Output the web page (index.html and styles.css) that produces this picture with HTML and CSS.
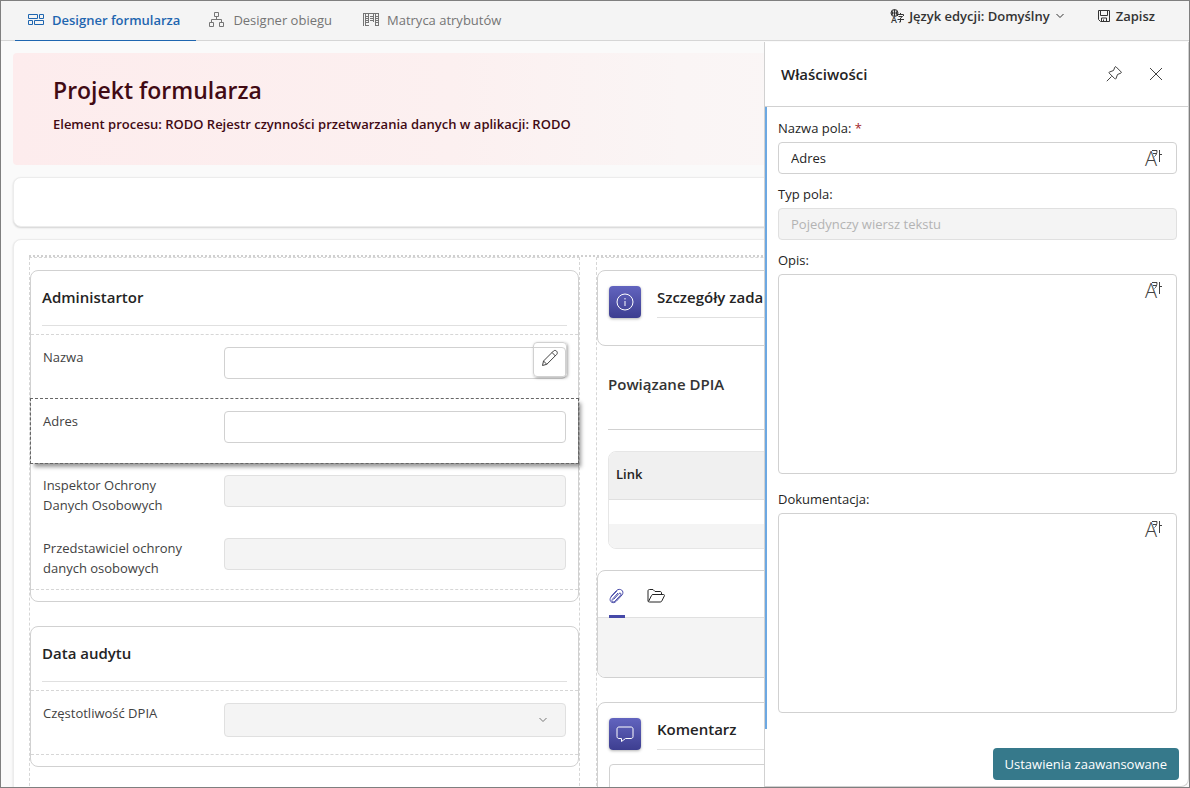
FILE: index.html
```html
<!DOCTYPE html>
<html lang="pl">
<head>
<meta charset="utf-8">
<meta name="viewport" content="width=device-width, initial-scale=1">
<title>Projekt formularza</title>
<link rel="stylesheet" href="styles.css">
</head>
<body>
<svg class="sprite" aria-hidden="true">
  <symbol id="i-translate" viewBox="0 0 18 18">
    <text class="glyph-latin" x="0" y="17">A</text>
    <path d="M7 1.500h5c0 3-.8 4.600-2.500 6M8 4.500h3.500M14.500 1v12M14.500 5.500H17"/>
  </symbol>
</svg>
<div class="app">
  <header class="topbar">
    <nav class="tabs">
      <button class="tab tab-active" type="button">
        <svg class="icon16" viewBox="0 0 16 16"><path d="M.5 2.500h9v4h-9zM11.500 2.500h4v4h-4zM.5 8.500h4v4h-4zM6.500 8.500h9v4h-9z"/></svg>
        Designer formularza
      </button>
      <button class="tab" type="button">
        <svg class="icon16" viewBox="0 0 16 16"><path d="M5.500.5h4v4h-4zM.5 10.500h4v4h-4zM10.500 10.500h4v4h-4zM7.500 4.500v3M2.500 10.500v-3h10v3"/></svg>
        Designer obiegu
      </button>
      <button class="tab tab-last" type="button">
        <svg class="icon16" viewBox="0 0 16 16"><path d="M.5 1v13M1 1.500h15M3 4.500h3M7 4.500h4M12 4.500h4M3 6.500h3M7 6.500h4M12 6.500h4M3 8.500h3M7 8.500h4M12 8.500h4M3 10.500h3M12 10.500h4M3 13.500h3M12 13.500h4M2.500 1v13M5.500 2v9M10.500 2v8M12.500 2v12M15.500 2v12"/></svg>
        Matryca atrybutów
      </button>
    </nav>
    <div class="commands">
      <button class="command" type="button">
        <svg class="icon14" viewBox="0 0 14 14"><circle cx="4.500" cy="4" r="3.500"/><path d="M1 4h7M4.500.5v7M3 1.500c-.8 1.500-.8 3.500 0 5M6 1.500c.8 1.500.8 3.500 0 5M7.500 7V5.500h6V7M10.500 4v1.500M8.500 7.500h4l-2 1.500v4H9M7.500 10.500H14"/><text class="glyph-small" x="1" y="14">A</text></svg>
        Język edycji: Domyślny
        <svg class="chevron" viewBox="0 0 10 6"><path d="M1.500 1l3.500 3.500L8.500 1"/></svg>
      </button>
      <button class="command" type="button">
        <svg class="icon14" viewBox="0 0 14 14"><path d="M1.500 1.500h11v11h-9l-2-2zM3.500 1.500v5h7v-5M4.500 12.500v-3.500h5v3.500M6.500 10.500v2"/></svg>
        Zapisz
      </button>
    </div>
  </header>

  <div class="workspace">
    <main class="canvas">
      <section class="banner">
        <h1>Projekt formularza</h1>
        <p>Element procesu: RODO Rejestr czynności przetwarzania danych w aplikacji: RODO</p>
      </section>
      <div class="card toolbar-card"></div>
      <div class="card form-card">
        <div class="columns">
          <div class="column">
            <section class="group">
              <h2 class="group-title">Administartor</h2>
              <div class="fields">
                <div class="row row-tall">
                  <label for="f-nazwa">Nazwa</label>
                  <div class="control">
                    <input id="f-nazwa" type="text">
                    <button class="edit" type="button" aria-label="Edytuj"><svg class="icon18" viewBox="0 0 18 18"><path d="M1.500 16.500l1-4.500L12.500 2c2-1.800 5 1 3.300 3.300L5.800 15.300zM11 3.500l3.500 3.500M2.500 12l3.300 3.300"/></svg></button>
                  </div>
                </div>
                <div class="row row-tall row-selected">
                  <label for="f-adres">Adres</label>
                  <div class="control"><input id="f-adres" type="text"></div>
                </div>
                <div class="row">
                  <label for="f-iod">Inspektor Ochrony Danych Osobowych</label>
                  <div class="control"><input id="f-iod" type="text" disabled></div>
                </div>
                <div class="row">
                  <label for="f-pod">Przedstawiciel ochrony danych osobowych</label>
                  <div class="control"><input id="f-pod" type="text" disabled></div>
                </div>
              </div>
            </section>
            <section class="group">
              <h2 class="group-title">Data audytu</h2>
              <div class="fields">
                <div class="row">
                  <label for="f-dpia">Częstotliwość DPIA</label>
                  <div class="control">
                    <select id="f-dpia" disabled><option></option></select>
                    <svg class="chevron select-arrow" viewBox="0 0 10 6"><path d="M1.500 1l3.500 3.500L8.500 1"/></svg>
                  </div>
                </div>
              </div>
            </section>
          </div>

          <div class="column">
            <section class="group widget">
              <span class="badge"><svg class="icon18" viewBox="0 0 18 18"><circle cx="9" cy="9" r="8"/><path d="M9 8v5M9 5v1.500"/></svg></span>
              <h2 class="widget-title">Szczegóły zadania</h2>
            </section>
            <section class="related">
              <h2 class="related-title">Powiązane DPIA</h2>
              <table class="links">
                <thead><tr><th>Link</th></tr></thead>
                <tbody><tr><td></td></tr><tr class="shaded"><td></td></tr></tbody>
              </table>
            </section>
            <section class="group attachments">
              <div class="mini-tabs">
                <button class="mini-tab mini-active" type="button" aria-label="Załączniki"><svg class="icon16" viewBox="0 0 16 16"><path d="M2 8.500L7.500 2.500C11-.5 16 3 13 7l-5.500 6c-3.500 4-8.500 0-5.500-4l6-6.200M4.500 11.500L10 5.500c1.200-1.200 2.800.2 1.700 1.500L6 13.200c-2 1.800-4-.2-2.500-2L9 5"/></svg></button>
                <button class="mini-tab mini-folder" type="button" aria-label="Folder"><svg class="icon18" viewBox="0 0 18 16"><path d="M1 13V3c0-1 .5-1.500 1.500-1.500h3.500l2 2h5c1 0 1.500.5 1.500 1.500v1.500M1.500 13.500l3-6c.3-.7.7-1 1.500-1h10.500c1 0 1.200.7.800 1.500l-2.500 5c-.3.600-.8 1-1.500 1H2.500C1.500 14 1 13.500 1 13"/></svg></button>
              </div>
              <div class="drop"></div>
            </section>
            <section class="group widget widget-comment">
              <span class="badge"><svg class="icon18" viewBox="0 0 18 18"><path d="M3 2h12c1.200 0 2 .8 2 2v7.500c0 1.200-.8 2-2 2H9.500L5.500 16.500v-3H3c-1.200 0-2-.8-2-2V4c0-1.200.8-2 2-2z"/></svg></span>
              <h2 class="widget-title"><label for="f-comment">Komentarz</label></h2>
              <textarea id="f-comment" class="comment"></textarea>
            </section>
          </div>
        </div>
      </div>
    </main>

    <aside class="panel">
      <div class="panel-head">
        <h2>Właściwości</h2>
        <button class="plain" type="button" aria-label="Przypnij"><svg class="icon16" viewBox="0 0 16 16"><path d="M10 .800l5.200 5.200c.3.400.2.900-.3 1.100L11.500 8.500 10 12.500c-.2.600-.7.700-1.100.300L3.200 7.100c-.4-.4-.3-.9.300-1.100L7.500 4.500 8.900 1.100c.2-.5.700-.6 1.100-.3zM5.500 10.500L.8 15.200"/></svg></button>
        <button class="plain" type="button" aria-label="Zamknij"><svg class="icon14" viewBox="0 0 14 14"><path d="M1 1l12 12M13 1L1 13"/></svg></button>
      </div>
      <div class="panel-body">
        <div class="prop">
          <label for="p-name">Nazwa pola: <span class="required">*</span></label>
          <div class="control"><input id="p-name" type="text" value="Adres"><button class="translate" type="button" aria-label="Tłumacz"><svg class="icon18"><use href="#i-translate"/></svg></button></div>
        </div>
        <div class="prop">
          <label for="p-type">Typ pola:</label>
          <div class="control"><input id="p-type" type="text" value="Pojedynczy wiersz tekstu" disabled></div>
        </div>
        <div class="prop prop-area">
          <label for="p-desc">Opis:</label>
          <div class="control"><textarea id="p-desc"></textarea><button class="translate" type="button" aria-label="Tłumacz"><svg class="icon18"><use href="#i-translate"/></svg></button></div>
        </div>
        <div class="prop prop-area">
          <label for="p-docs">Dokumentacja:</label>
          <div class="control"><textarea id="p-docs"></textarea><button class="translate" type="button" aria-label="Tłumacz"><svg class="icon18"><use href="#i-translate"/></svg></button></div>
        </div>
      </div>
      <div class="panel-foot"><button class="primary" type="button">Ustawienia zaawansowane</button></div>
    </aside>
  </div>
</div>
</body>
</html>
```
FILE: styles.css
```css
*, *::before, *::after { box-sizing: border-box; }
body { margin: 0; font: 13px/20px "Open Sans", "Noto Sans", sans-serif; color: #242424; }
h1, h2, p { margin: 0; }
button, input, select, textarea { font: inherit; color: inherit; }
button { margin: 0; padding: 0; border: 0; background: none; }
svg { fill: none; stroke: currentColor; stroke-width: 1; flex: none; display: block; overflow: visible; }
symbol { overflow: visible; }
.sprite { display: none; }
.icon14 { width: 14px; height: 14px; }
.icon16 { width: 16px; height: 16px; }
.icon18 { width: 18px; height: 18px; }
.chevron { width: 10px; height: 6px; }
.glyph-latin { font: 300 20px "Open Sans", sans-serif; fill: currentColor; stroke: none; }
.glyph-small { font: 600 9px "Open Sans", sans-serif; fill: currentColor; stroke: none; }

.app { display: flex; flex-direction: column; height: 100vh; border: 1px solid #7f7f7f; overflow: hidden; background: #fafafa; }

.topbar { display: flex; justify-content: space-between; height: 40px; flex: none; padding: 0 34px 0 14px; background: #f4f4f4; border-bottom: 1px solid #d6d6d6; }
.tabs { display: flex; }
.tab { display: flex; align-items: center; gap: 8px; height: 40px; padding: 0 16px 2px 13px; color: #757575; border-bottom: 1px solid transparent; }
.tab-last { margin-left: 2px; }
.tab-active { color: #1f66b0; font-weight: 600; border-bottom-color: #1f66b0; }
.commands { display: flex; gap: 32px; height: 30px; }
.command { display: flex; align-items: center; gap: 5px; color: #333; font-weight: 600; }

.workspace { position: relative; flex: 1; min-height: 0; }
.canvas { height: 100%; overflow: hidden; padding: 12px 24px 0 12px; }
.banner { padding: 21px 40px 31px; border-radius: 4px; color: #410a14; background: linear-gradient(90deg, #fdeced, #fcf0f0 38%, #faf5f5 58%, #fafafa); }
.banner h1 { font-size: 23px; line-height: 32px; font-weight: 600; }
.banner p { margin-top: 8px; font-weight: 600; }
.card { margin-top: 12px; background: #fff; border: 1px solid #ececec; border-radius: 8px; box-shadow: 0 1px 2px rgba(0, 0, 0, .16); }
.toolbar-card { height: 50px; }
.form-card { padding: 15px 17px 40px 15px; }

.columns { display: grid; grid-template-columns: 1fr 1fr; gap: 16px; border-top: 2px dotted #d0d0d0; }
.column { min-width: 0; padding-top: 12px; border: 1px dashed #d6d6d6; display: flex; flex-direction: column; gap: 24px; }
.group { border: 1px solid #d1d1d1; border-radius: 8px; background: #fff; }
.group-title { margin: 0 11px 8px; padding: 15px 0 17px; border-bottom: 1px solid #e0e0e0; font-size: 15px; line-height: 22px; font-weight: 600; }
.fields { border: dashed #d6d6d6; border-width: 1px 0; margin-bottom: 11px; }
.row { display: grid; grid-template-columns: 157px 1fr; gap: 24px; min-height: 63px; padding: 12px 12px 11px; color: #424242; }
.row-tall { min-height: 64px; }
.row-selected { outline: 1px dashed #666; box-shadow: 3px 4px 4px rgba(0, 0, 0, .4); background: #fff; }
.control { position: relative; }
.control input, .control select { display: block; width: 100%; height: 32px; padding: 0 12px; border: 1px solid #d1d1d1; border-radius: 4px; background: #fff; }
.control select { height: 34px; appearance: none; }
.control input:disabled, .control select:disabled { background: #f4f4f4; border-color: #e0e0e0; color: #b3b3b3; opacity: 1; }
.select-arrow { position: absolute; right: 18px; top: 14px; color: #777; }
.edit { position: absolute; right: -1px; top: -5px; width: 34px; height: 35px; padding-bottom: 3px; display: grid; place-items: center; border: 1px solid #d1d1d1; border-radius: 4px; box-shadow: 1px 1px 3px rgba(0, 0, 0, .35); }

.widget { display: grid; grid-template-columns: 32px 1fr; column-gap: 16px; padding: 15px 11px 27px; }
.widget-comment { row-gap: 14px; padding-bottom: 16px; }
.badge { display: grid; place-items: center; height: 32px; border-radius: 4px; color: #fff; background: linear-gradient(#6264bf, #3d3e90); box-shadow: 0 1px 3px rgba(0, 0, 0, .3); }
.widget-title { height: 32px; border-bottom: 1px solid #e0e0e0; font-size: 15px; line-height: 22px; font-weight: 600; }
.comment { grid-column: 1 / -1; height: 64px; border: 1px solid #d1d1d1; border-radius: 4px; resize: none; }
.related { margin-bottom: -3px; padding: 3px 11px 0; }
.related-title { padding-bottom: 34px; border-bottom: 1px solid #d1d1d1; font-size: 15px; line-height: 22px; font-weight: 600; color: #333; }
.links { width: 100%; margin-top: 21px; border-spacing: 0; border: 1px solid #e6e6e6; border-radius: 8px; overflow: hidden; }
.links th { height: 48px; padding: 0 7px 3px; text-align: left; font-weight: 600; background: #f0f0f0; border-bottom: 1px solid #e0e0e0; }
.links td { height: 24px; padding: 0; }
.shaded { background: #f4f4f4; }
.attachments { overflow: hidden; }
.mini-tabs { display: flex; gap: 22px; height: 47px; padding: 0 11px; border-bottom: 1px solid #e0e0e0; }
.mini-tab { display: grid; place-items: center; height: 47px; padding-top: 6px; border-bottom: 3px solid transparent; }
.mini-active { color: #4649a8; border-bottom-color: #4649a8; }
.drop { height: 59px; background: #f4f4f4; }

.panel { position: absolute; top: 1px; right: 0; bottom: 0; width: 425px; max-width: 100%; display: flex; flex-direction: column; background: #fff; border: 1px solid #d1d1d1; border-top: 0; border-bottom-right-radius: 8px; }
.panel-head { display: flex; align-items: center; gap: 27px; height: 65px; flex: none; padding: 0 25px 0 16px; border-bottom: 1px solid #d1d1d1; }
.panel-head h2 { flex: 1; font-size: 15px; line-height: 22px; font-weight: 600; }
.plain { color: #424242; }
.panel-body { padding: 11px; border-left: 2px solid #6ca8e2; display: flex; flex-direction: column; gap: 10px; }
.prop label { display: block; margin-bottom: 4px; }
.prop-area { margin-bottom: 5px; }
.required { color: #a4262c; }
.panel textarea { display: block; width: 100%; height: 200px; padding: 6px 12px; border: 1px solid #d1d1d1; border-radius: 4px; resize: none; }
.translate { position: absolute; right: 14px; top: 7px; color: #424242; }
.panel-foot { margin-top: auto; padding: 0 9px 6px; display: flex; justify-content: flex-end; }
.primary { height: 32px; padding: 0 12px; border-radius: 4px; background: #36798b; color: #fff; }
```
